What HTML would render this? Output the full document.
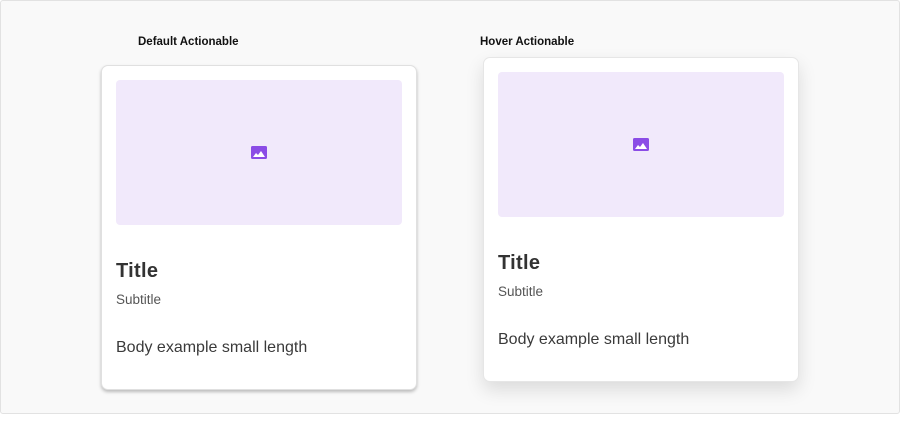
<!DOCTYPE html><html><head><style>
body{margin:0;width:900px;height:423px;background:#fff;font-family:"Liberation Sans",sans-serif;position:relative;overflow:hidden}
.frame{position:absolute;left:0;top:0;width:898px;height:412px;border:1px solid #e2e2e2;background:#f9f9f9;border-radius:3px}
.lbl{position:absolute;font-size:11.5px;font-weight:bold;color:#111}
.card{position:absolute;width:316px;height:325px;background:#fff;border-radius:7px;box-sizing:border-box}
.c1{left:101px;top:65px;border:1px solid #e0e0e0;box-shadow:0 2px 3px rgba(0,0,0,.25)}
.c2{left:483px;top:57px;height:325px;border:1px solid #e6e6e6;box-shadow:0 8px 18px rgba(0,0,0,.12)}
.img{position:absolute;left:14px;top:14px;width:286px;height:145px;background:#f1e9fb;border-radius:4px}
.img svg{position:absolute;left:135px;top:66px}
.t{position:absolute;left:14px;top:194px;font-size:20px;color:#333;font-weight:bold;letter-spacing:.3px}
.s{position:absolute;left:14px;top:226px;font-size:13.5px;color:#555}
.b{position:absolute;left:14px;top:273px;font-size:16px;color:#3a3a3a}
</style></head><body>
<div class="frame"></div>
<div class="lbl" style="left:138px;top:36px">Default Actionable</div>
<div class="lbl" style="left:480px;top:36px">Hover Actionable</div>
<div class="card c1"><div class="img"><svg width="16" height="13" viewBox="0 0 16 13"><rect width="16" height="13" rx="1.5" fill="#8b4ce6"/><path d="M2 11 L5 7 L7 9 L10 5 L14 11 Z" fill="#fff"/></svg></div>
<div class="t">Title</div><div class="s">Subtitle</div><div class="b">Body example small length</div></div>
<div class="card c2"><div class="img"><svg width="16" height="13" viewBox="0 0 16 13"><rect width="16" height="13" rx="1.5" fill="#8b4ce6"/><path d="M2 11 L5 7 L7 9 L10 5 L14 11 Z" fill="#fff"/></svg></div>
<div class="t">Title</div><div class="s">Subtitle</div><div class="b">Body example small length</div></div>
</body></html>
